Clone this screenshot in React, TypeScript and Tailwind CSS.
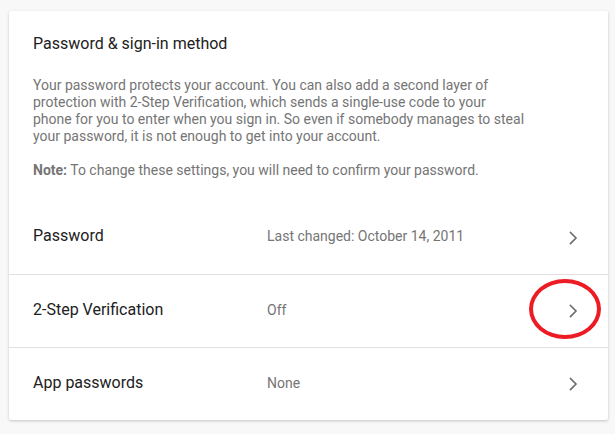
import React from "react";

function Chevron() {
  return (
    <svg width="10" height="16" viewBox="0 0 10 16" className="shrink-0">
      <path d="M2.5 2.5 L8 8 L2.5 13.5" fill="none" stroke="#6b6b6b" strokeWidth="1.6" strokeLinecap="square" strokeLinejoin="miter" />
    </svg>
  );
}

function Row({ label, value, circled, border }: { label: string; value: string; circled?: boolean; border?: boolean }) {
  return (
    <div className={`relative flex h-[73px] items-center pl-[24px] pr-[30px] ${border ? "border-t border-[#e0e0e0]" : ""}`}>
      <div className="w-[234px] pb-[3px] text-[16px] leading-[20px] text-[#212121]">{label}</div>
      <div className="flex-1 pb-[3px] text-[14px] leading-[18px] text-[#757575]">{value}</div>
      <Chevron />
      {circled && (
        <div className="pointer-events-none absolute right-[7px] top-[4px] h-[60px] w-[72px] rounded-[50%] border-[4px] border-[#ed1c24]" />
      )}
    </div>
  );
}

export default function App() {
  return (
    <div className="min-h-[434px] w-[615px] bg-[#f8f8f8] pt-[11px] pl-[9px]" style={{ fontFamily: "Roboto, 'Liberation Sans', sans-serif" }}>
      <div className="w-[599px] rounded-[2px] bg-white shadow-[0_1px_3px_rgba(0,0,0,0.22)]">
        <div className="px-[24px] pt-[23px] pb-[22px]">
          <div className="text-[16px] leading-[20px] text-[#212121]">Password &amp; sign-in method</div>
          <p className="mt-[23px] text-[14px] leading-[17px] text-[#757575]">
            Your password protects your account. You can also add a second layer of
            <br />
            protection with 2-Step Verification, which sends a single-use code to your
            <br />
            phone for you to enter when you sign in. So even if somebody manages to steal
            <br />
            your password, it is not enough to get into your account.
          </p>
          <p className="mt-[17px] text-[14px] leading-[17px] text-[#757575]">
            <span className="font-bold">Note:</span> To change these settings, you will need to confirm your password.
          </p>
        </div>
        <Row label="Password" value="Last changed: October 14, 2011" />
        <Row label="2-Step Verification" value="Off" circled border />
        <Row label="App passwords" value="None" border />
      </div>
    </div>
  );
}
